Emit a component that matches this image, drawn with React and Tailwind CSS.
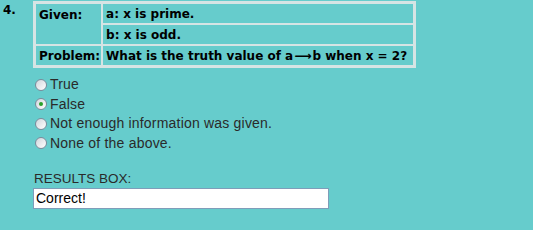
export default function App() {
  const options = ['True', 'False', 'Not enough information was given.', 'None of the above.']
  const selected = 1
  const cell = 'border border-[#d6e4e4] px-[3px] align-middle h-[21px]'

  return (
    <div className="w-[533px] h-[230px] bg-[#66cccc] relative overflow-hidden">
      <div className="flex items-start">
        <div className="w-[33px] pl-[3px] pt-[1px] text-[12px] font-bold text-black font-['DejaVu_Sans',sans-serif]">4.</div>
        <div className="flex flex-col">
          <table className="mt-[1px] border-2 border-[#d6e4e4] border-separate border-spacing-0 text-[12px] font-bold text-black font-['DejaVu_Sans',sans-serif] w-[383px]">
            <tbody>
              <tr>
                <td rowSpan={2} className={cell + ' align-top pt-[2px] w-[64px]'}>Given:</td>
                <td className={cell}>a: x is prime.</td>
              </tr>
              <tr>
                <td className={cell}>b: x is odd.</td>
              </tr>
              <tr>
                <td className={cell + ' whitespace-nowrap pr-[1px]'}>Problem:</td>
                <td className={cell + ' whitespace-nowrap'}>What is the truth value of a<span className="inline-block align-middle mx-[1px] text-[12px] leading-none">⟶</span>b when x = 2?</td>
              </tr>
            </tbody>
          </table>

          <div className="mt-[7px] flex flex-col font-['Liberation_Sans',Arial,sans-serif] text-[14px] text-[#2a2a2a]">
            {options.map((o, i) => (
              <label key={o} className="flex items-center h-[19.5px] gap-[3px]">
                <span className="ml-[2px] w-[12px] h-[12px] rounded-full border border-[#7b8b9b] bg-gradient-to-br from-[#d0d6dc] to-white flex items-center justify-center">
                  {i === selected && <span className="w-[4px] h-[4px] rounded-full bg-[#2aa02a]" />}
                </span>
                <span className="tracking-[0.2px]">{o}</span>
              </label>
            ))}
          </div>

          <div className="mt-[18px] font-['Liberation_Sans',Arial,sans-serif] text-[13.5px] text-[#2a2a2a] pl-[1px] leading-[16px]">RESULTS BOX:</div>
          <div className="mt-[1px] w-[296px] h-[21px] bg-white border border-[#7f9db9] px-[2px] flex items-center font-['Liberation_Sans',Arial,sans-serif] text-[14px] text-black">Correct!</div>
        </div>
      </div>
    </div>
  )
}
